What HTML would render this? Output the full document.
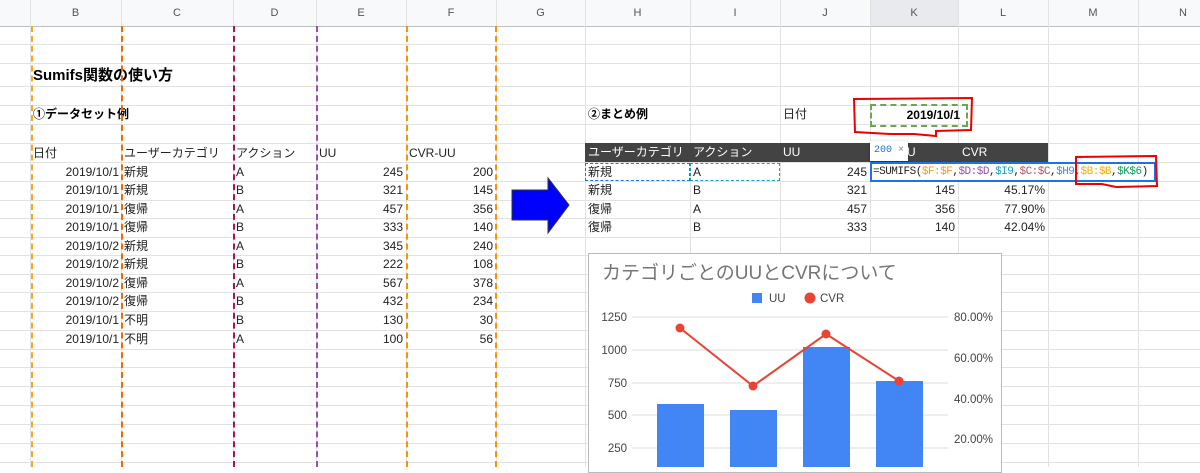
<!DOCTYPE html>
<html><head><meta charset="utf-8"><style>
*{margin:0;padding:0;box-sizing:border-box}
body{width:1200px;height:467px;overflow:hidden;background:#fff;position:relative;font-family:"Liberation Sans","Noto Sans CJK JP",sans-serif;font-size:12px;color:#222}
.a{position:absolute}
.h{position:absolute;left:0;width:1200px;height:1px;background:#e2e2e2}
.v{position:absolute;top:0;width:1px;height:467px;background:#e2e2e2}
.hd{position:absolute;top:0;height:26px;line-height:26px;text-align:center;color:#555;font-size:11px}
.t{position:absolute;height:19px;line-height:19px;white-space:nowrap}
.r{text-align:right}
.dv{position:absolute;top:26px;height:441px;width:0;border-left:2px dashed}
</style></head><body>
<div class="a" style="left:0;top:0;width:1200px;height:26px;background:#f8f9fa"></div>
<div class="a" style="left:870px;top:0;width:88px;height:26px;background:#e8eaed"></div>
<div class="h" style="top:26px;background:#c0c0c0"></div>
<div class="h" style="top:44px"></div><div class="h" style="top:63px"></div><div class="h" style="top:86px"></div><div class="h" style="top:105px"></div><div class="h" style="top:124px"></div><div class="h" style="top:143px"></div><div class="h" style="top:162px"></div><div class="h" style="top:181px"></div><div class="h" style="top:200px"></div><div class="h" style="top:218px"></div><div class="h" style="top:237px"></div><div class="h" style="top:255px"></div><div class="h" style="top:274px"></div><div class="h" style="top:292px"></div><div class="h" style="top:311px"></div><div class="h" style="top:330px"></div><div class="h" style="top:349px"></div><div class="h" style="top:367px"></div><div class="h" style="top:386px"></div><div class="h" style="top:405px"></div><div class="h" style="top:424px"></div><div class="h" style="top:443px"></div><div class="h" style="top:462px"></div>
<div class="v" style="left:30px"></div><div class="v" style="left:121px"></div><div class="v" style="left:233px"></div><div class="v" style="left:316px"></div><div class="v" style="left:406px"></div><div class="v" style="left:496px"></div><div class="v" style="left:585px"></div><div class="v" style="left:690px"></div><div class="v" style="left:780px"></div><div class="v" style="left:870px"></div><div class="v" style="left:958px"></div><div class="v" style="left:1048px"></div><div class="v" style="left:1138px"></div>
<div class="hd" style="left:30px;width:91px">B</div><div class="hd" style="left:121px;width:112px">C</div><div class="hd" style="left:233px;width:83px">D</div><div class="hd" style="left:316px;width:90px">E</div><div class="hd" style="left:406px;width:90px">F</div><div class="hd" style="left:496px;width:89px">G</div><div class="hd" style="left:585px;width:105px">H</div><div class="hd" style="left:690px;width:90px">I</div><div class="hd" style="left:780px;width:90px">J</div><div class="hd" style="left:870px;width:88px">K</div><div class="hd" style="left:958px;width:90px">L</div><div class="hd" style="left:1048px;width:90px">M</div><div class="hd" style="left:1138px;width:90px">N</div>

<div class="t" style="left:33px;top:65px;height:22px;line-height:22px;font-size:15px;font-weight:bold;color:#000">Sumifs関数の使い方</div>
<div class="t" style="left:33px;top:105px;font-weight:bold;color:#000">①データセット例</div>
<div class="t" style="left:33px;top:144px">日付</div><div class="t" style="left:124px;top:144px">ユーザーカテゴリ</div><div class="t" style="left:236px;top:144px">アクション</div><div class="t" style="left:319px;top:144px">UU</div><div class="t" style="left:409px;top:144px">CVR-UU</div>

<div class="t r" style="left:30px;width:89px;top:163px">2019/10/1</div><div class="t" style="left:124px;top:163px">新規</div><div class="t" style="left:236px;top:163px">A</div><div class="t r" style="left:316px;width:87px;top:163px">245</div><div class="t r" style="left:406px;width:87px;top:163px">200</div>
<div class="t r" style="left:30px;width:89px;top:181px">2019/10/1</div><div class="t" style="left:124px;top:181px">新規</div><div class="t" style="left:236px;top:181px">B</div><div class="t r" style="left:316px;width:87px;top:181px">321</div><div class="t r" style="left:406px;width:87px;top:181px">145</div>
<div class="t r" style="left:30px;width:89px;top:200px">2019/10/1</div><div class="t" style="left:124px;top:200px">復帰</div><div class="t" style="left:236px;top:200px">A</div><div class="t r" style="left:316px;width:87px;top:200px">457</div><div class="t r" style="left:406px;width:87px;top:200px">356</div>
<div class="t r" style="left:30px;width:89px;top:218px">2019/10/1</div><div class="t" style="left:124px;top:218px">復帰</div><div class="t" style="left:236px;top:218px">B</div><div class="t r" style="left:316px;width:87px;top:218px">333</div><div class="t r" style="left:406px;width:87px;top:218px">140</div>
<div class="t r" style="left:30px;width:89px;top:237px">2019/10/2</div><div class="t" style="left:124px;top:237px">新規</div><div class="t" style="left:236px;top:237px">A</div><div class="t r" style="left:316px;width:87px;top:237px">345</div><div class="t r" style="left:406px;width:87px;top:237px">240</div>
<div class="t r" style="left:30px;width:89px;top:255px">2019/10/2</div><div class="t" style="left:124px;top:255px">新規</div><div class="t" style="left:236px;top:255px">B</div><div class="t r" style="left:316px;width:87px;top:255px">222</div><div class="t r" style="left:406px;width:87px;top:255px">108</div>
<div class="t r" style="left:30px;width:89px;top:274px">2019/10/2</div><div class="t" style="left:124px;top:274px">復帰</div><div class="t" style="left:236px;top:274px">A</div><div class="t r" style="left:316px;width:87px;top:274px">567</div><div class="t r" style="left:406px;width:87px;top:274px">378</div>
<div class="t r" style="left:30px;width:89px;top:292px">2019/10/2</div><div class="t" style="left:124px;top:292px">復帰</div><div class="t" style="left:236px;top:292px">B</div><div class="t r" style="left:316px;width:87px;top:292px">432</div><div class="t r" style="left:406px;width:87px;top:292px">234</div>
<div class="t r" style="left:30px;width:89px;top:311px">2019/10/1</div><div class="t" style="left:124px;top:311px">不明</div><div class="t" style="left:236px;top:311px">B</div><div class="t r" style="left:316px;width:87px;top:311px">130</div><div class="t r" style="left:406px;width:87px;top:311px">30</div>
<div class="t r" style="left:30px;width:89px;top:330px">2019/10/1</div><div class="t" style="left:124px;top:330px">不明</div><div class="t" style="left:236px;top:330px">A</div><div class="t r" style="left:316px;width:87px;top:330px">100</div><div class="t r" style="left:406px;width:87px;top:330px">56</div>

<div class="dv" style="left:31px;border-color:#f9a825"></div>
<div class="dv" style="left:121px;border-color:#ef6c00"></div>
<div class="dv" style="left:233px;border-color:#ad1457"></div>
<div class="dv" style="left:316px;border-color:#9c4fb0"></div>
<div class="dv" style="left:406px;border-color:#ff9100"></div>
<div class="dv" style="left:495px;border-color:#ff9100"></div>

<svg class="a" style="left:510px;top:176px" width="62" height="60"><polygon points="2,14 38,14 38,2 59,29 38,57 38,44 2,44" fill="#0000ff" stroke="#333" stroke-width="1"/></svg>

<div class="t" style="left:588px;top:105px;font-weight:bold;color:#000">②まとめ例</div>
<div class="t" style="left:783px;top:105px">日付</div>
<div class="a" style="left:870px;top:104px;width:98px;height:23px;border:2px dashed #6aa84f"></div>
<div class="t r" style="left:870px;width:90px;top:106px;font-weight:bold;color:#000">2019/10/1</div>
<svg class="a" style="left:850px;top:96px" width="126" height="42"><path d="M4,3 L122,2 L121,34 L86,35 L86,40 L64,38 L40,38 L5,36 Z" fill="none" stroke="#e00" stroke-width="2"/></svg>

<div class="a" style="left:585px;top:143px;width:463px;height:19px;background:#434343"></div>
<div class="t" style="left:588px;top:143px;color:#fff">ユーザーカテゴリ</div><div class="t" style="left:693px;top:143px;color:#fff">アクション</div><div class="t" style="left:783px;top:143px;color:#fff">UU</div><div class="t" style="left:907px;top:143px;color:#fff">U</div><div class="t" style="left:962px;top:143px;color:#fff">CVR</div>

<div class="a" style="left:585px;top:163px;width:105px;height:18px;border:1.5px dashed #1a73e8"></div>
<div class="a" style="left:690px;top:163px;width:90px;height:18px;border:1.5px dashed #12a4c4"></div>
<div class="t" style="left:588px;top:163px">新規</div><div class="t" style="left:693px;top:163px">A</div><div class="t r" style="left:780px;width:87px;top:163px">245</div>
<div class="t" style="left:588px;top:181px">新規</div><div class="t" style="left:693px;top:181px">B</div><div class="t r" style="left:780px;width:87px;top:181px">321</div><div class="t r" style="left:870px;width:85px;top:181px">145</div><div class="t r" style="left:958px;width:87px;top:181px">45.17%</div>
<div class="t" style="left:588px;top:200px">復帰</div><div class="t" style="left:693px;top:200px">A</div><div class="t r" style="left:780px;width:87px;top:200px">457</div><div class="t r" style="left:870px;width:85px;top:200px">356</div><div class="t r" style="left:958px;width:87px;top:200px">77.90%</div>
<div class="t" style="left:588px;top:218px">復帰</div><div class="t" style="left:693px;top:218px">B</div><div class="t r" style="left:780px;width:87px;top:218px">333</div><div class="t r" style="left:870px;width:85px;top:218px">140</div><div class="t r" style="left:958px;width:87px;top:218px">42.04%</div>

<div class="a" style="left:870px;top:141px;width:38px;height:20px;background:#fff;box-shadow:0 1px 3px rgba(0,0,0,.35);font-size:10px;line-height:20px;padding-left:4px;font-family:'Liberation Mono',monospace;color:#1a73e8;white-space:nowrap">200 <span style="color:#888">×</span></div>
<div class="a" style="left:870px;top:162px;width:286px;height:20px;background:#fff;border:2px solid #1a73e8;font-family:'Liberation Mono',monospace;font-size:11px;line-height:16px;padding-left:1px;white-space:nowrap;letter-spacing:-0.5px;overflow:hidden">=SUMIFS(<span style="color:#f7981d">$F:$F</span>,<span style="color:#9c4fb0">$D:$D</span>,<span style="color:#12a4c4">$I9</span>,<span style="color:#b3546c">$C:$C</span>,<span style="color:#4a86e8">$H9</span>,<span style="color:#f9ab00">$B:$B</span>,<span style="color:#0f9d58">$K$6</span>)</div>
<svg class="a" style="left:1072px;top:154px" width="90" height="36"><path d="M4,3 L84,2 L85,32 L44,33 L30,30 L4,30 Z" fill="none" stroke="#e00" stroke-width="2"/></svg>

<div class="a" style="left:588px;top:253px;width:414px;height:220px;background:#fff;border:1px solid #bbb"></div>
<div class="t" style="left:602px;top:262px;height:24px;line-height:24px;font-size:19px;color:#757575">カテゴリごとのUUとCVRについて</div>
<svg class="a" style="left:588px;top:253px" width="414" height="214" font-family="Liberation Sans, sans-serif" font-size="11.5" fill="#444">
<rect x="164" y="40" width="10" height="10" fill="#4285f4"/><text x="181" y="49">UU</text>
<circle cx="222" cy="45" r="5.5" fill="#ea4335"/><text x="232" y="49">CVR</text>
<g stroke="#ddd" stroke-width="1"><line x1="44" y1="64" x2="360" y2="64"/><line x1="44" y1="97" x2="360" y2="97"/><line x1="44" y1="130" x2="360" y2="130"/><line x1="44" y1="162" x2="360" y2="162"/><line x1="44" y1="195" x2="360" y2="195"/></g>
<g text-anchor="end"><text x="39" y="68">1250</text><text x="39" y="101">1000</text><text x="39" y="134">750</text><text x="39" y="166">500</text><text x="39" y="199">250</text></g>
<g><text x="366" y="68">80.00%</text><text x="366" y="109">60.00%</text><text x="366" y="150">40.00%</text><text x="366" y="190">20.00%</text></g>
<g fill="#4285f4"><rect x="69" y="151" width="47" height="70"/><rect x="142" y="157" width="47" height="70"/><rect x="215" y="94" width="47" height="130"/><rect x="288" y="128" width="47" height="100"/></g>
<polyline points="92,75 165,133 238,81 311,128" fill="none" stroke="#ea4335" stroke-width="2"/>
<g fill="#ea4335"><circle cx="92" cy="75" r="4.5"/><circle cx="165" cy="133" r="4.5"/><circle cx="238" cy="81" r="4.5"/><circle cx="311" cy="128" r="4.5"/></g>
</svg>
</body></html>
